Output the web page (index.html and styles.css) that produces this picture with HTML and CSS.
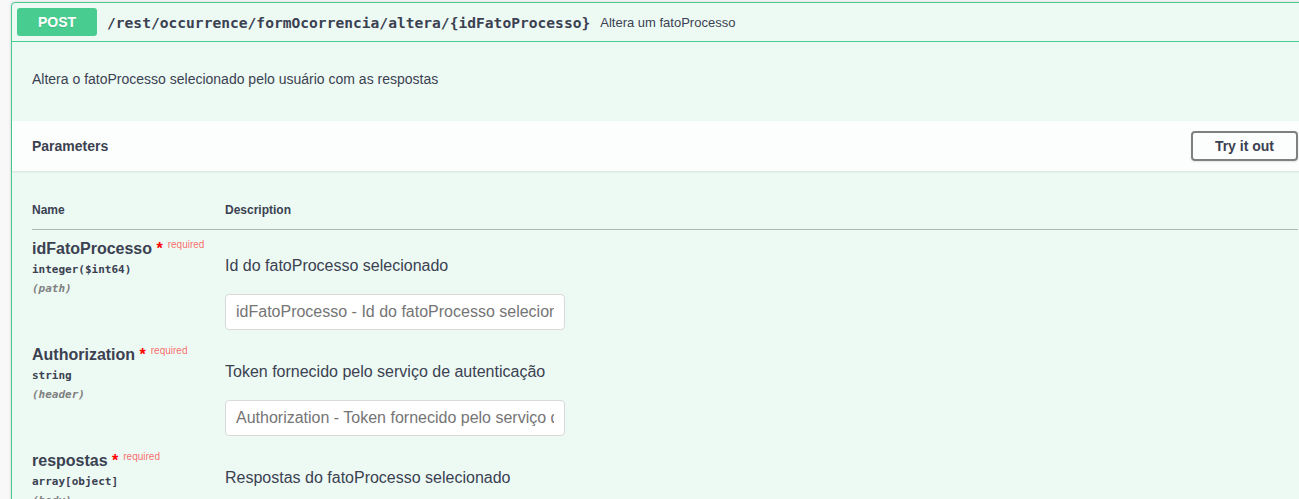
FILE: index.html
```html
<!DOCTYPE html>
<html lang="pt">
<head>
<meta charset="utf-8">
<title>POST /rest/occurrence/formOcorrencia/altera/{idFatoProcesso}</title>
<link rel="stylesheet" href="styles.css">
</head>
<body>
<div class="page">
  <div class="opblock">
    <div class="summary">
      <span class="method">POST</span>
      <span class="path">/rest/occurrence/formOcorrencia/altera/{idFatoProcesso}</span>
      <span class="summary-desc">Altera um fatoProcesso</span>
    </div>
    <div class="description">
      <p>Altera o fatoProcesso selecionado pelo usuário com as respostas</p>
    </div>
    <div class="section-header">
      <h4>Parameters</h4>
      <button class="btn">Try it out</button>
    </div>
    <div class="table-container">
      <table class="parameters">
        <thead>
          <tr>
            <th class="col-name">Name</th>
            <th class="col-desc">Description</th>
          </tr>
        </thead>
        <tbody>
          <tr>
            <td class="col-name">
              <div class="param-name">idFatoProcesso<span class="star">&nbsp;*</span><span class="req">required</span></div>
              <div class="param-type">integer($int64)</div>
              <div class="param-in">(path)</div>
            </td>
            <td class="col-desc">
              <p class="param-desc">Id do fatoProcesso selecionado</p>
              <input class="param-input" type="text" placeholder="idFatoProcesso - Id do fatoProcesso selecionado">
            </td>
          </tr>
          <tr>
            <td class="col-name">
              <div class="param-name">Authorization<span class="star">&nbsp;*</span><span class="req">required</span></div>
              <div class="param-type">string</div>
              <div class="param-in">(header)</div>
            </td>
            <td class="col-desc">
              <p class="param-desc">Token fornecido pelo serviço de autenticação</p>
              <input class="param-input" type="text" placeholder="Authorization - Token fornecido pelo serviço de autenticação">
            </td>
          </tr>
          <tr>
            <td class="col-name">
              <div class="param-name">respostas<span class="star">&nbsp;*</span><span class="req">required</span></div>
              <div class="param-type">array[object]</div>
              <div class="param-in">(body)</div>
            </td>
            <td class="col-desc">
              <p class="param-desc">Respostas do fatoProcesso selecionado</p>
            </td>
          </tr>
        </tbody>
      </table>
    </div>
  </div>
</div>
</body>
</html>
```
FILE: styles.css
```css
html, body {
  margin: 0;
  padding: 0;
  overflow: hidden;
  background: #f8f8f8;
}
body {
  font-family: "Liberation Sans", Arial, sans-serif;
  color: #3b4151;
}
.page {
  padding: 2px 0 0 11px;
  width: 1320px;
}
.opblock {
  width: 1306px;
  border: 1px solid #49cc90;
  border-radius: 4px;
  background: #edfaf4;
  box-shadow: 0 0 3px rgba(0, 0, 0, 0.19);
}
.summary {
  display: flex;
  align-items: center;
  padding: 5px;
  border-bottom: 1px solid #49cc90;
}
.method {
  min-width: 80px;
  box-sizing: border-box;
  height: 28px;
  line-height: 28px;
  text-align: center;
  background: #49cc90;
  color: #fff;
  font-size: 14px;
  font-weight: 700;
  border-radius: 3px;
  text-shadow: 0 1px 0 rgba(0, 0, 0, 0.1);
}
.path {
  font-family: "DejaVu Sans Mono", "Liberation Mono", monospace;
  font-size: 14.6px;
  font-weight: 700;
  padding: 0 10px;
  color: #3b4151;
}
.summary-desc {
  font-size: 13px;
  color: #3b4151;
}
.description {
  padding: 15px 20px;
  margin-bottom: 5px;
}
.description p {
  margin: 14px 0;
  font-size: 14px;
}
.section-header {
  display: flex;
  align-items: center;
  min-height: 50px;
  box-sizing: border-box;
  padding: 8px 20px;
  background: rgba(255, 255, 255, 0.8);
  box-shadow: 0 1px 2px rgba(0, 0, 0, 0.1);
}
.section-header h4 {
  flex: 1;
  margin: 0;
  font-size: 14px;
  font-weight: 700;
}
.btn {
  font-family: "Liberation Sans", Arial, sans-serif;
  font-size: 14px;
  font-weight: 700;
  line-height: 16px;
  padding: 5px 22px;
  border: 2px solid #808080;
  border-radius: 4px;
  background: transparent;
  color: #3b4151;
  box-shadow: 0 1px 2px rgba(0, 0, 0, 0.1);
}
.table-container {
  padding: 20px;
}
.parameters {
  width: 100%;
  border-collapse: collapse;
}
.parameters th {
  text-align: left;
  font-size: 12px;
  font-weight: 700;
  padding: 12px 0;
  line-height: 14px;
  border-bottom: 1px solid rgba(59, 65, 81, 0.2);
}
.parameters td {
  vertical-align: top;
  padding: 10px 0 0;
}
.col-name {
  width: 193px;
}
.param-name {
  font-size: 16px;
  font-weight: 700;
  white-space: nowrap;
}
.star {
  color: red;
}
.req {
  position: relative;
  top: -6px;
  padding: 5px;
  font-size: 10px;
  font-weight: 400;
  color: rgba(255, 0, 0, 0.6);
}
.param-type {
  font-family: "DejaVu Sans Mono", "Liberation Mono", monospace;
  font-size: 11px;
  font-weight: 700;
  padding: 5px 0;
  line-height: 14px;
}
.param-in {
  font-family: "DejaVu Sans Mono", "Liberation Mono", monospace;
  font-size: 11px;
  font-weight: 700;
  font-style: italic;
  color: #808080;
  line-height: 14px;
}
.param-desc {
  margin: 17px 0 19px;
  font-size: 16px;
}
.param-input {
  display: block;
  box-sizing: border-box;
  width: 340px;
  height: 36px;
  margin: 5px 0 6px;
  padding: 8px 10px;
  border: 1px solid #d9d9d9;
  border-radius: 4px;
  background: #fff;
  font-family: "Liberation Sans", Arial, sans-serif;
  font-size: 16px;
  color: #3b4151;
}
.param-input::placeholder {
  color: #757575;
}
```
